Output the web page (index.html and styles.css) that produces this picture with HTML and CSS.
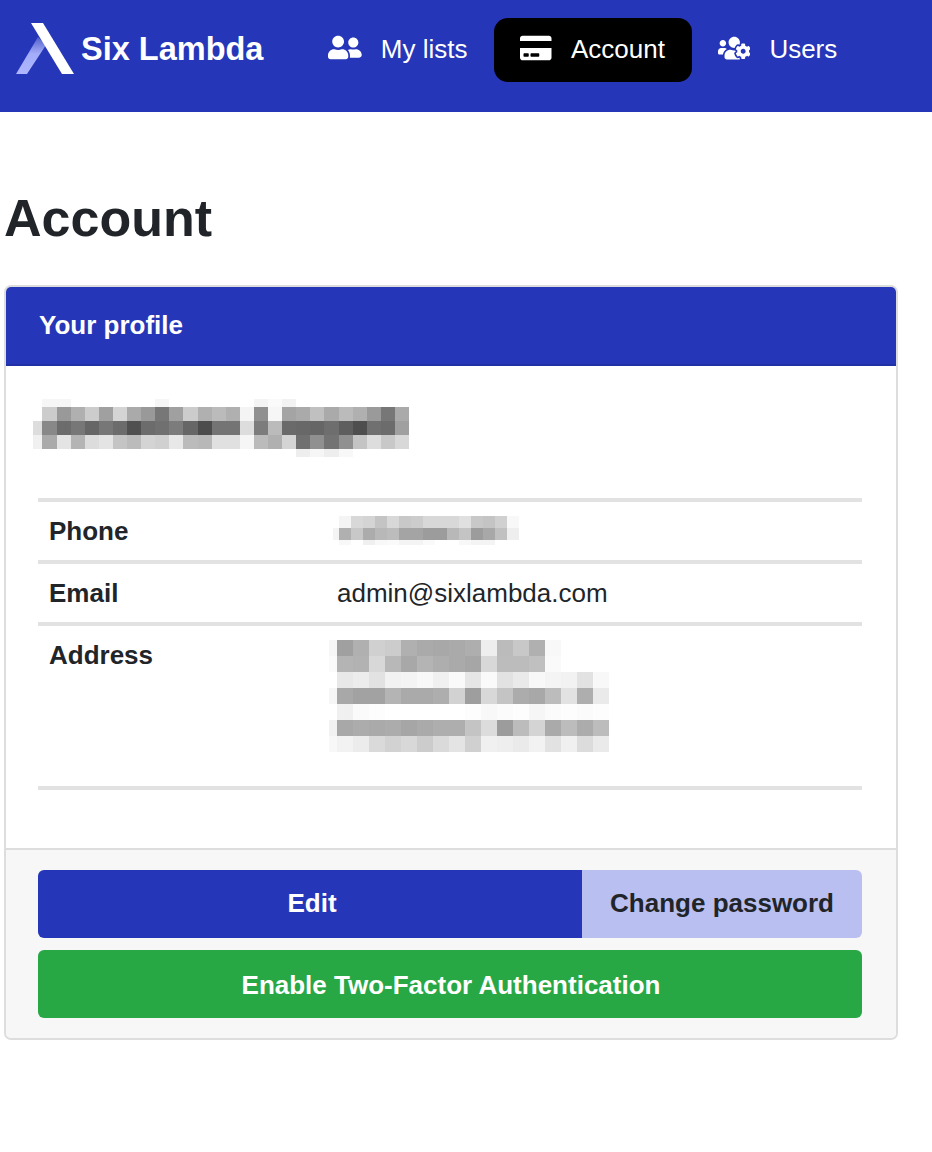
FILE: index.html
```html
<!DOCTYPE html>
<html lang="en">
<head>
    <meta charset="UTF-8">
    <meta name="viewport" content="width=device-width, initial-scale=1.0">
    <title>Account</title>
    <link rel="stylesheet" href="styles.css">
</head>
<body>
    <nav class="navbar">
        <a class="brand" href="#">
            <svg class="brand-logo" viewBox="0 0 60 54">
                <defs>
                    <linearGradient id="legFade" x1="0" y1="1" x2="0" y2="0">
                        <stop offset="0" stop-color="#aeb6ff"/>
                        <stop offset="0.55" stop-color="#a3acf8"/>
                        <stop offset="1" stop-color="#5260cc"/>
                    </linearGradient>
                </defs>
                <polygon points="1,52 12,52 31,23 23,15" fill="url(#legFade)"/>
                <polygon points="16,1 28,1 59,52 47,52" fill="#fff"/>
            </svg>
            <span>Six Lambda</span>
        </a>
        <a class="nav-link" href="#">
            <svg class="nav-icon" viewBox="0 0 640 512"><path d="M192 256c61.9 0 112-50.1 112-112S253.9 32 192 32 80 82.1 80 144s50.1 112 112 112zm76.8 32h-8.3c-20.8 10-43.9 16-68.5 16s-47.6-6-68.5-16h-8.3C51.6 288 0 339.6 0 403.2V432c0 26.5 21.5 48 48 48h288c26.5 0 48-21.5 48-48v-28.8c0-63.6-51.6-115.2-115.2-115.2zM480 256c53 0 96-43 96-96s-43-96-96-96-96 43-96 96 43 96 96 96zm48 32h-3.8c-13.9 4.8-28.6 8-44.2 8s-30.3-3.2-44.2-8H432c-20.4 0-39.2 5.9-55.7 15.4 24.4 26.3 39.7 61.2 39.7 99.8v38.4c0 2.2-.5 4.3-.6 6.4H592c26.5 0 48-21.5 48-48 0-61.9-50.1-112-112-112z"/></svg>
            My lists
        </a>
        <a class="nav-link active" href="#">
            <svg class="nav-icon icon-card" viewBox="0 0 576 512"><path d="M0 432c0 26.5 21.5 48 48 48h480c26.5 0 48-21.5 48-48V256H0v176zm192-68c0-6.6 5.4-12 12-12h136c6.6 0 12 5.4 12 12v40c0 6.6-5.4 12-12 12H204c-6.6 0-12-5.4-12-12v-40zm-128 0c0-6.6 5.4-12 12-12h72c6.6 0 12 5.4 12 12v40c0 6.6-5.4 12-12 12H76c-6.6 0-12-5.4-12-12v-40zM576 80v48H0V80c0-26.5 21.5-48 48-48h480c26.5 0 48 21.5 48 48z"/></svg>
            Account
        </a>
        <a class="nav-link" href="#">
            <svg class="nav-icon icon-users" viewBox="0 0 640 512"><path d="M610.5 341.3c2.6-14.1 2.6-28.5 0-42.6l25.8-14.9c3-1.7 4.3-5.2 3.3-8.5-6.7-21.6-18.2-41.2-33.2-57.4-2.3-2.5-6-3.1-9-1.4l-25.8 14.9c-10.9-9.3-23.4-16.5-36.9-21.3v-29.8c0-3.4-2.4-6.4-5.7-7.1-22.3-5-45-4.8-66.2 0-3.3.7-5.7 3.7-5.7 7.1v29.8c-13.5 4.8-26 12-36.9 21.3l-25.8-14.9c-2.9-1.7-6.7-1.1-9 1.4-15 16.2-26.5 35.8-33.2 57.4-1 3.3.4 6.8 3.3 8.5l25.8 14.9c-2.6 14.1-2.6 28.5 0 42.6l-25.8 14.9c-3 1.7-4.3 5.2-3.3 8.5 6.7 21.6 18.2 41.1 33.2 57.4 2.3 2.5 6 3.1 9 1.4l25.8-14.9c10.9 9.3 23.4 16.5 36.9 21.3v29.8c0 3.4 2.4 6.4 5.7 7.1 22.3 5 45 4.8 66.2 0 3.3-.7 5.7-3.7 5.7-7.1v-29.8c13.5-4.8 26-12 36.9-21.3l25.8 14.9c2.9 1.7 6.7 1.1 9-1.4 15-16.2 26.5-35.8 33.2-57.4 1-3.3-.4-6.8-3.3-8.5l-25.8-14.9zM496 368.5c-26.8 0-48.5-21.8-48.5-48.5s21.8-48.5 48.5-48.5 48.5 21.8 48.5 48.5-21.7 48.5-48.5 48.5zM96 224c35.3 0 64-28.7 64-64s-28.7-64-64-64-64 28.7-64 64 28.7 64 64 64zm224 32c1.9 0 3.7-.5 5.6-.6 8.3-21.7 20.5-42.1 36.3-59.2 7.4-8 17.9-12.6 28.9-12.6 6.9 0 13.7 1.8 19.6 5.3l7.9 4.6c.8-.5 1.6-.9 2.4-1.4 7-14.6 11.2-30.8 11.2-48 0-61.9-50.1-112-112-112S208 82.1 208 144c0 61.9 50.1 112 112 112zm105.2 194.5c-2.3-1.2-4.6-2.6-6.8-3.9-8.2 4.8-15.3 9.8-27.5 9.8-10.9 0-21.4-4.6-28.9-12.6-18.3-19.8-32.3-43.9-40.2-69.6-10.7-34.5 24.9-49.7 25.8-50.3-.1-2.6-.1-5.2 0-7.8l-7.9-4.6c-3.8-2.2-7-5-9.8-8.1-3.3.2-6.5.6-9.8.6-24.6 0-47.6-6-68.5-16h-8.3C179.6 288 128 339.6 128 403.2V432c0 26.5 21.5 48 48 48h255.4c-3.7-6-6.2-12.8-6.2-20.3v-9.2zM173.1 274.6C161.5 263.1 145.6 256 128 256H64c-35.3 0-64 28.7-64 64v32c0 17.7 14.3 32 32 32h65.9c6.3-47.4 34.9-87.3 75.2-109.4z"/></svg>
            Users
        </a>
    </nav>

    <main class="content">
        <h1>Account</h1>

        <section class="card">
            <header class="card-header">Your profile</header>
            <div class="card-body">
                <!-- name, pixelated -->
                <svg class="pixels pixels-name" viewBox=".33 -.57 26.67 4.14" preserveAspectRatio="none">
                    <rect x="1" y="-1" fill="#f6f6f6"/><rect x="2" y="-1" fill="#f6f6f6"/><rect x="9" y="-1" fill="#f6f6f6"/><rect x="16" y="-1" fill="#f4f4f4"/><rect x="17" y="-1" fill="#fafafa"/><rect x="18" y="-1" fill="#f2f2f2"/>
                    <rect x="1" y="0" fill="#ccc"/><rect x="2" y="0" fill="#999"/><rect x="3" y="0" fill="#b0b0b0"/><rect x="4" y="0" fill="#ccc"/><rect x="5" y="0" fill="#a0a0a0"/><rect x="6" y="0" fill="#d4d4d4"/><rect x="7" y="0" fill="#aaa"/><rect x="8" y="0" fill="#999"/><rect x="9" y="0" fill="#777"/><rect x="10" y="0" fill="#a0a0a0"/><rect x="11" y="0" fill="#ccc"/><rect x="12" y="0" fill="#b0b0b0"/><rect x="13" y="0" fill="#bbb"/><rect x="14" y="0" fill="#b0b0b0"/><rect x="15" y="0" fill="#f4f4f4"/><rect x="16" y="0" fill="#909090"/><rect x="17" y="0" fill="#f6f6f6"/><rect x="18" y="0" fill="#a4a4a4"/><rect x="19" y="0" fill="#aaa"/><rect x="20" y="0" fill="#c0c0c0"/><rect x="21" y="0" fill="#aaa"/><rect x="22" y="0" fill="#bbb"/><rect x="23" y="0" fill="#b0b0b0"/><rect x="24" y="0" fill="#9a9a9a"/><rect x="25" y="0" fill="#777"/><rect x="26" y="0" fill="#aaa"/>
                    <rect x="0" y="1" fill="#ddd"/><rect x="1" y="1" fill="#888"/><rect x="2" y="1" fill="#6c6c6c"/><rect x="3" y="1" fill="#777"/><rect x="4" y="1" fill="#666"/><rect x="5" y="1" fill="#777"/><rect x="6" y="1" fill="#6c6c6c"/><rect x="7" y="1" fill="#505050"/><rect x="8" y="1" fill="#6c6c6c"/><rect x="9" y="1" fill="#707070"/><rect x="10" y="1" fill="#7c7c7c"/><rect x="11" y="1" fill="#666"/><rect x="12" y="1" fill="#4c4c4c"/><rect x="13" y="1" fill="#747474"/><rect x="14" y="1" fill="#747474"/><rect x="15" y="1" fill="#ddd"/><rect x="16" y="1" fill="#7c7c7c"/><rect x="17" y="1" fill="#bbb"/><rect x="18" y="1" fill="#6a6a6a"/><rect x="19" y="1" fill="#686868"/><rect x="20" y="1" fill="#666"/><rect x="21" y="1" fill="#6e6e6e"/><rect x="22" y="1" fill="#5e5e5e"/><rect x="23" y="1" fill="#4e4e4e"/><rect x="24" y="1" fill="#707070"/><rect x="25" y="1" fill="#6c6c6c"/><rect x="26" y="1" fill="#a0a0a0"/>
                    <rect x="0" y="2" fill="#f0f0f0"/><rect x="1" y="2" fill="#aaa"/><rect x="2" y="2" fill="#e4e4e4"/><rect x="3" y="2" fill="#b4b4b4"/><rect x="4" y="2" fill="#dcdcdc"/><rect x="5" y="2" fill="#e4e4e4"/><rect x="6" y="2" fill="#c4c4c4"/><rect x="7" y="2" fill="#bbb"/><rect x="8" y="2" fill="#d4d4d4"/><rect x="9" y="2" fill="#d0d0d0"/><rect x="10" y="2" fill="#e8e8e8"/><rect x="11" y="2" fill="#bbb"/><rect x="12" y="2" fill="#b8b8b8"/><rect x="13" y="2" fill="#e0e0e0"/><rect x="14" y="2" fill="#e0e0e0"/><rect x="15" y="2" fill="#f6f6f6"/><rect x="16" y="2" fill="#bbb"/><rect x="17" y="2" fill="#b0b0b0"/><rect x="18" y="2" fill="#d4d4d4"/><rect x="19" y="2" fill="#707070"/><rect x="20" y="2" fill="#909090"/><rect x="21" y="2" fill="#737373"/><rect x="22" y="2" fill="#909090"/><rect x="23" y="2" fill="#c4c4c4"/><rect x="24" y="2" fill="#ddd"/><rect x="25" y="2" fill="#c8c8c8"/><rect x="26" y="2" fill="#d8d8d8"/>
                    <rect x="19" y="3" fill="#eee"/><rect x="20" y="3" fill="#f6f6f6"/><rect x="21" y="3" fill="#eee"/><rect x="22" y="3" fill="#f8f8f8"/>
                </svg>

                <table class="profile-table">
                    <tr>
                        <th>Phone</th>
                        <td>
                            <svg class="pixels pixels-phone" viewBox="-.5 0 15.5 2.42" preserveAspectRatio="none">
                                <rect x="0" y="0" fill="#f4f4f4"/><rect x="1" y="0" fill="#d8d8d8"/><rect x="2" y="0" fill="#d4d4d4"/><rect x="3" y="0" fill="#c4c4c4"/><rect x="4" y="0" fill="#d8d8d8"/><rect x="5" y="0" fill="#c8c8c8"/><rect x="6" y="0" fill="#ccc"/><rect x="7" y="0" fill="#d8d8d8"/><rect x="8" y="0" fill="#d8d8d8"/><rect x="9" y="0" fill="#d8d8d8"/><rect x="10" y="0" fill="#e0e0e0"/><rect x="11" y="0" fill="#c8c8c8"/><rect x="12" y="0" fill="#c4c4c4"/><rect x="13" y="0" fill="#d0d0d0"/><rect x="14" y="0" fill="#f8f8f8"/>
                                <rect x="-1" y="1" fill="#f4f4f4"/><rect x="0" y="1" fill="#b0b0b0"/><rect x="1" y="1" fill="#c8c8c8"/><rect x="2" y="1" fill="#acacac"/><rect x="3" y="1" fill="#b8b8b8"/><rect x="4" y="1" fill="#bcbcbc"/><rect x="5" y="1" fill="#a4a4a4"/><rect x="6" y="1" fill="#a4a4a4"/><rect x="7" y="1" fill="#9c9c9c"/><rect x="8" y="1" fill="#9c9c9c"/><rect x="9" y="1" fill="#b8b8b8"/><rect x="10" y="1" fill="#c4c4c4"/><rect x="11" y="1" fill="#9c9c9c"/><rect x="12" y="1" fill="#a8a8a8"/><rect x="13" y="1" fill="#c0c0c0"/><rect x="14" y="1" fill="#eee"/>
                                <rect x="0" y="2" fill="#f8f8f8"/><rect x="2" y="2" fill="#f0f0f0"/><rect x="3" y="2" fill="#f8f8f8"/><rect x="4" y="2" fill="#fafafa"/><rect x="5" y="2" fill="#f4f4f4"/><rect x="6" y="2" fill="#f4f4f4"/><rect x="7" y="2" fill="#fafafa"/><rect x="10" y="2" fill="#f8f8f8"/><rect x="11" y="2" fill="#f4f4f4"/><rect x="12" y="2" fill="#f4f4f4"/>
                            </svg>
                        </td>
                    </tr>
                    <tr>
                        <th>Email</th>
                        <td>admin@sixlambda.com</td>
                    </tr>
                    <tr>
                        <th>Address</th>
                        <td>
                            <svg class="pixels pixels-address" viewBox="-.5 0 17.5 7" preserveAspectRatio="none">
                                <rect x="-1" y="0" fill="#f6f6f6"/><rect x="0" y="0" fill="#a0a0a0"/><rect x="1" y="0" fill="#b0b0b0"/><rect x="2" y="0" fill="#d0d0d0"/><rect x="3" y="0" fill="#ccc"/><rect x="4" y="0" fill="#b0b0b0"/><rect x="5" y="0" fill="#aaa"/><rect x="6" y="0" fill="#a8a8a8"/><rect x="7" y="0" fill="#aaa"/><rect x="8" y="0" fill="#aeaeae"/><rect x="9" y="0" fill="#eee"/><rect x="10" y="0" fill="#bbb"/><rect x="11" y="0" fill="#c8c8c8"/><rect x="12" y="0" fill="#b0b0b0"/><rect x="13" y="0" fill="#f8f8f8"/>
                                <rect x="-1" y="1" fill="#fafafa"/><rect x="0" y="1" fill="#b4b4b4"/><rect x="1" y="1" fill="#b2b2b2"/><rect x="2" y="1" fill="#d8d8d8"/><rect x="3" y="1" fill="#b8b8b8"/><rect x="4" y="1" fill="#a8a8a8"/><rect x="5" y="1" fill="#b4b4b4"/><rect x="6" y="1" fill="#aeaeae"/><rect x="7" y="1" fill="#aaa"/><rect x="8" y="1" fill="#a6a6a6"/><rect x="9" y="1" fill="#d8d8d8"/><rect x="10" y="1" fill="#bcbcbc"/><rect x="11" y="1" fill="#bcbcbc"/><rect x="12" y="1" fill="#c0c0c0"/><rect x="13" y="1" fill="#fafafa"/>
                                <rect x="0" y="2" fill="#e8e8e8"/><rect x="1" y="2" fill="#ececec"/><rect x="2" y="2" fill="#e2e2e2"/><rect x="3" y="2" fill="#f2f2f2"/><rect x="4" y="2" fill="#f4f4f4"/><rect x="5" y="2" fill="#f8f8f8"/><rect x="6" y="2" fill="#f0f0f0"/><rect x="7" y="2" fill="#fafafa"/><rect x="8" y="2" fill="#e6e6e6"/><rect x="9" y="2" fill="#fafafa"/><rect x="10" y="2" fill="#e2e2e2"/><rect x="11" y="2" fill="#eaeaea"/><rect x="12" y="2" fill="#f8f8f8"/><rect x="13" y="2" fill="#f4f4f4"/><rect x="14" y="2" fill="#f2f2f2"/><rect x="15" y="2" fill="#e2e2e2"/><rect x="16" y="2" fill="#f8f8f8"/>
                                <rect x="-1" y="3" fill="#f6f6f6"/><rect x="0" y="3" fill="#a8a8a8"/><rect x="1" y="3" fill="#a2a2a2"/><rect x="2" y="3" fill="#a2a2a2"/><rect x="3" y="3" fill="#b4b4b4"/><rect x="4" y="3" fill="#aaa"/><rect x="5" y="3" fill="#aaa"/><rect x="6" y="3" fill="#aeaeae"/><rect x="7" y="3" fill="#d2d2d2"/><rect x="8" y="3" fill="#9e9e9e"/><rect x="9" y="3" fill="#d8d8d8"/><rect x="10" y="3" fill="#c4c4c4"/><rect x="11" y="3" fill="#acacac"/><rect x="12" y="3" fill="#a8a8a8"/><rect x="13" y="3" fill="#bcbcbc"/><rect x="14" y="3" fill="#e2e2e2"/><rect x="15" y="3" fill="#aeaeae"/><rect x="16" y="3" fill="#eaeaea"/>
                                <rect x="0" y="4" fill="#f0f0f0"/><rect x="1" y="4" fill="#fafafa"/><rect x="2" y="4" fill="#fdfdfd"/><rect x="8" y="4" fill="#fdfdfd"/><rect x="9" y="4" fill="#f8f8f8"/><rect x="10" y="4" fill="#fbfbfb"/><rect x="11" y="4" fill="#fdfdfd"/><rect x="12" y="4" fill="#f6f6f6"/><rect x="13" y="4" fill="#fbfbfb"/><rect x="14" y="4" fill="#fdfdfd"/><rect x="15" y="4" fill="#fbfbfb"/><rect x="16" y="4" fill="#fdfdfd"/>
                                <rect x="-1" y="5" fill="#f2f2f2"/><rect x="0" y="5" fill="#a8a8a8"/><rect x="1" y="5" fill="#acacac"/><rect x="2" y="5" fill="#aaa"/><rect x="3" y="5" fill="#acacac"/><rect x="4" y="5" fill="#a6a6a6"/><rect x="5" y="5" fill="#aaa"/><rect x="6" y="5" fill="#aeaeae"/><rect x="7" y="5" fill="#aeaeae"/><rect x="8" y="5" fill="#c4c4c4"/><rect x="9" y="5" fill="#dcdcdc"/><rect x="10" y="5" fill="#9c9c9c"/><rect x="11" y="5" fill="#bcbcbc"/><rect x="12" y="5" fill="#d4d4d4"/><rect x="13" y="5" fill="#aaa"/><rect x="14" y="5" fill="#bcbcbc"/><rect x="15" y="5" fill="#acacac"/><rect x="16" y="5" fill="#bcbcbc"/>
                                <rect x="-1" y="6" fill="#f8f8f8"/><rect x="0" y="6" fill="#f2f2f2"/><rect x="1" y="6" fill="#ececec"/><rect x="2" y="6" fill="#dadada"/><rect x="3" y="6" fill="#d2d2d2"/><rect x="4" y="6" fill="#d8d8d8"/><rect x="5" y="6" fill="#ccc"/><rect x="6" y="6" fill="#dadada"/><rect x="7" y="6" fill="#e4e4e4"/><rect x="8" y="6" fill="#d0d0d0"/><rect x="9" y="6" fill="#f0f0f0"/><rect x="10" y="6" fill="#eee"/><rect x="11" y="6" fill="#eaeaea"/><rect x="12" y="6" fill="#f2f2f2"/><rect x="13" y="6" fill="#e2e2e2"/><rect x="14" y="6" fill="#f0f0f0"/><rect x="15" y="6" fill="#dcdcdc"/><rect x="16" y="6" fill="#eaeaea"/>
                            </svg>
                        </td>
                    </tr>
                </table>
            </div>
            <footer class="card-footer">
                <div class="btn-group">
                    <a class="btn btn-primary" href="#">Edit</a>
                    <a class="btn btn-light" href="#">Change password</a>
                </div>
                <a class="btn btn-success" href="#">Enable Two-Factor Authentication</a>
            </footer>
        </section>
    </main>
</body>
</html>
```

FILE: styles.css
```css
body {
    margin: 0;
    background-color: #fff;
    color: #212529;
    font-family: "Liberation Sans", Arial, sans-serif;
    font-size: 26px;
    line-height: 39px;
}
a {
    color: inherit;
    text-decoration: none;
}

/* navbar */
.navbar {
    display: flex;
    align-items: center;
    height: 64px;
    padding: 18px 0 30px 15px;
    background-color: #2536b8;
    color: #fff;
}
.brand {
    display: flex;
    align-items: center;
    gap: 6px;
    width: 287px;
    height: 62px;
    padding-bottom: 2px;
    font-size: 32.5px;
    font-weight: bold;
}
.brand-logo {
    width: 60px;
    height: 54px;
}
.nav-link {
    display: flex;
    align-items: center;
    gap: 19px;
    height: 62px;
    padding: 0 27px 2px 26px;
    border-radius: 14px;
}
.nav-link.active {
    background-color: #000;
}
.nav-icon {
    height: 27px;
    margin-bottom: 3px;
    fill: #fff;
}
.icon-card {
    height: 28px;
}
.icon-users {
    height: 26px;
}

/* page */
.content {
    padding: 75px 34px 0 4px;
}
h1 {
    margin: 0 0 36px;
    font-size: 52px;
    line-height: 62px;
}

/* card */
.card {
    border: 2px solid #ddd;
    border-radius: 7px;
    overflow: hidden;
}
.card-header {
    padding: 19px 33px 19px;
    background-color: #2536b8;
    border-bottom: 2px solid #2230a6;
    color: #fff;
    font-weight: bold;
}
.card-body {
    padding: 33px 34px 58px 32px;
}

/* pixelated values */
.pixels {
    display: block;
    shape-rendering: crispEdges;
}
.pixels rect {
    width: 1px;
    height: 1px;
}
.pixels-name {
    width: 376px;
    height: 58px;
    margin: 0 0 41px -5px;
}
.pixels-phone {
    width: 186px;
    height: 29px;
    margin: 4px 0 6px -4px;
}
.pixels-address {
    width: 280px;
    height: 112px;
    margin: 4px 0 25px -8px;
}

/* profile table */
.profile-table {
    width: 100%;
    border-collapse: separate;
    border-spacing: 0;
    border-top: 4px solid #e2e2e2;
}
.profile-table th,
.profile-table td {
    padding: 10px 11px 9px;
    border-bottom: 4px solid #e2e2e2;
    text-align: left;
    vertical-align: top;
}
.profile-table th {
    width: 266px;
}

/* footer buttons */
.card-footer {
    display: flex;
    flex-direction: column;
    gap: 12px;
    padding: 20px 34px 20px 32px;
    border-top: 2px solid #ddd;
    background-color: #f7f7f7;
}
.btn-group {
    display: flex;
}
.btn {
    display: block;
    padding: 14px 28px 15px;
    border-radius: 6px;
    font-weight: bold;
    text-align: center;
}
.btn-primary {
    flex: 1;
    padding-left: 32px;
    background-color: #2536b8;
    color: #fff;
    border-radius: 6px 0 0 6px;
}
.btn-light {
    background-color: #b9bff0;
    border-radius: 0 6px 6px 0;
}
.btn-success {
    padding: 16px 28px 13px 30px;
    background-color: #28a745;
    color: #fff;
}
```
